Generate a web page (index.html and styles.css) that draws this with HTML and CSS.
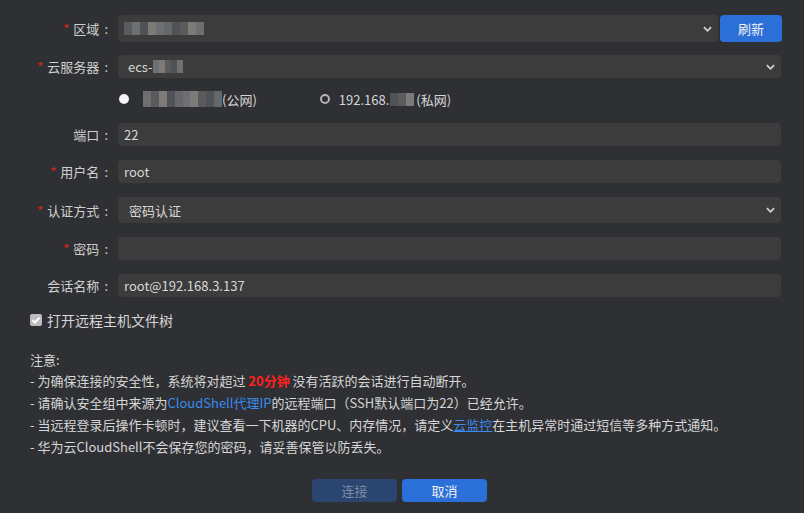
FILE: index.html
```html
<!DOCTYPE html>
<html lang="zh-CN">
<head>
    <meta charset="UTF-8">
    <title>远程登录</title>
    <link rel="stylesheet" href="styles.css">
</head>
<body>
    <div class="dialog">
        <div class="form-row row-tall">
            <label class="label required">区域</label>
            <div class="field with-btn">
                <div class="select">
                    <span class="mosaic">
                        <i class="m1"></i><i class="m2"></i><i class="m3"></i><i class="m4"></i><i class="m2"></i><i class="m5"></i><i class="m3"></i><i class="m1"></i><i class="m4"></i><i class="m2"></i>
                    </span>
                    <svg class="chevron" viewBox="0 0 10 6"><path d="M1 1l4 4 4-4" /></svg>
                </div>
                <button class="btn btn-primary btn-refresh">刷新</button>
            </div>
        </div>

        <div class="form-row">
            <label class="label required">云服务器</label>
            <div class="select">
                <span class="select-text">ecs-<span class="mosaic small"><i class="m2"></i><i class="m4"></i><i class="m1"></i><i class="m3"></i><i class="m2"></i></span></span>
                <svg class="chevron" viewBox="0 0 10 6"><path d="M1 1l4 4 4-4" /></svg>
            </div>
        </div>

        <div class="radio-row">
            <span class="radio radio-public"></span>
            <span class="mosaic ip-blur"><i class="m2"></i><i class="m1"></i><i class="m4"></i><i class="m3"></i><i class="m5"></i><i class="m2"></i><i class="m4"></i><i class="m1"></i><i class="m3"></i><i class="m5"></i></span><span class="radio-text">(公网)</span>
            <span class="radio radio-private"></span>
            <span class="radio-text">192.168.</span><span class="mosaic ip-short"><i class="m3"></i><i class="m1"></i><i class="m4"></i></span><span class="radio-text">(私网)</span>
        </div>

        <div class="form-row">
            <label class="label">端口</label>
            <div class="input">22</div>
        </div>

        <div class="form-row">
            <label class="label required">用户名</label>
            <div class="input">root</div>
        </div>

        <div class="form-row row-select">
            <label class="label required">认证方式</label>
            <div class="select">
                <span class="select-text">密码认证</span>
                <svg class="chevron" viewBox="0 0 10 6"><path d="M1 1l4 4 4-4" /></svg>
            </div>
        </div>

        <div class="form-row">
            <label class="label required">密码</label>
            <div class="input"></div>
        </div>

        <div class="form-row">
            <label class="label">会话名称</label>
            <div class="input">root@192.168.3.137</div>
        </div>

        <div class="check-row">
            <span class="checkbox">
                <svg viewBox="0 0 12 12"><path d="M2.6 6.3l2.3 2.3 4.6-5" /></svg>
            </span>
            打开远程主机文件树
        </div>

        <div class="notes">
            <p>注意:</p>
            <p>- 为确保连接的安全性，系统将对超过 <span class="warn">20分钟</span> 没有活跃的会话进行自动断开。</p>
            <p>- 请确认安全组中来源为<span class="link">CloudShell代理IP</span>的远程端口（SSH默认端口为22）已经允许。</p>
            <p>- 当远程登录后操作卡顿时，建议查看一下机器的CPU、内存情况，请定义<span class="link underline">云监控</span>在主机异常时通过短信等多种方式通知。</p>
            <p>- 华为云CloudShell不会保存您的密码，请妥善保管以防丢失。</p>
        </div>

        <div class="footer">
            <button class="btn btn-disabled">连接</button>
            <button class="btn btn-primary">取消</button>
        </div>
    </div>
</body>
</html>
```

FILE: styles.css
```css
html, body {
    margin: 0;
    padding: 0;
    background: #2f3033;
}

body {
    font-family: "Microsoft YaHei", "Noto Sans CJK SC", "Noto Sans", sans-serif;
    font-size: 13px;
    color: #d6d6d6;
}

.dialog {
    width: 804px;
    height: 513px;
    box-sizing: border-box;
    padding: 15px 23px 0 0;
}

.form-row {
    display: flex;
    align-items: center;
    height: 23px;
    margin-bottom: 14px;
}

.row-tall {
    height: 27px;
    margin-bottom: 13px;
}

.row-select {
    height: 26px;
}

.label {
    width: 108px;
    flex: none;
    text-align: right;
    margin-right: 10px;
    white-space: nowrap;
    color: #d0d0d0;
}

.label::after {
    content: ":";
    margin-left: 5px;
}

.required::before {
    content: "*";
    color: #e02020;
    margin-right: 4px;
}

.field {
    flex: 1;
    display: flex;
    height: 100%;
}

.with-btn {
    gap: 2px;
}

.input,
.select {
    flex: 1;
    height: 100%;
    background: #3c3c3c;
    border-radius: 4px;
    display: flex;
    align-items: center;
    padding: 0 6px;
    box-sizing: border-box;
    color: #d8d8d8;
}

.select {
    justify-content: space-between;
    padding: 0 6px 0 10px;
}

.row-tall .select {
    padding-left: 6px;
}

.row-select .select {
    padding-left: 11px;
}

.select-text {
    display: flex;
    align-items: center;
}

.chevron {
    width: 9px;
    height: 6px;
    fill: none;
    stroke: #cfcfcf;
    stroke-width: 2;
}

.btn {
    border: none;
    border-radius: 4px;
    font-family: inherit;
    font-size: 13px;
    height: 23px;
    width: 85px;
    padding: 0;
}

.btn-primary {
    background: #2b6fd8;
    color: #f2f2f2;
}

.btn-refresh {
    width: 62px;
    height: 27px;
    flex: none;
    margin-right: -1px;
}

.btn-disabled {
    background: #2a4670;
    color: #7e8ea8;
}

/* 打码块 */
.mosaic {
    display: inline-flex;
    height: 13px;
    align-items: stretch;
}

.mosaic i {
    display: block;
    width: 8px;
}

.mosaic.small i {
    width: 6px;
}

.m1 { background: #5b5b5e; }
.m2 { background: #6e6f70; }
.m3 { background: #4f5256; }
.m4 { background: #7c7b78; }
.m5 { background: #66676b; }

.radio-row {
    display: flex;
    align-items: center;
    height: 20px;
    padding-left: 119px;
    margin: -3px 0 14px;
}

.radio {
    width: 10px;
    height: 10px;
    border-radius: 50%;
    flex: none;
    box-sizing: border-box;
}

.radio-public {
    background: #f4f4f4;
    margin-right: 14px;
}

.radio-private {
    border: 2.5px solid #b4b4b4;
    background: #2f3033;
    margin: 0 9px 0 63px;
}

.ip-blur {
    height: 16px;
    width: 79px;
    overflow: hidden;
}

.ip-short {
    margin: 0 2px 0 1px;
}

.check-row {
    display: flex;
    align-items: center;
    padding-left: 30px;
    margin-top: 7px;
    height: 18px;
    font-size: 14px;
}

.checkbox {
    width: 12px;
    height: 12px;
    border-radius: 2px;
    background: #bdbdbd;
    margin-right: 5px;
    display: flex;
}

.checkbox svg {
    width: 12px;
    height: 12px;
    fill: none;
    stroke: #ffffff;
    stroke-width: 2;
}

.notes {
    padding-left: 30px;
    margin-top: 20px;
    line-height: 22px;
}

.notes p {
    margin: 0;
}

.notes p:first-child {
    margin-bottom: -1px;
}

.warn {
    color: #ff2020;
    font-weight: bold;
}

.link {
    color: #3b8bf0;
}

.underline {
    text-decoration: underline;
}

.footer {
    display: flex;
    justify-content: center;
    gap: 5px;
    margin-top: 21px;
    padding-left: 18px;
}
```
